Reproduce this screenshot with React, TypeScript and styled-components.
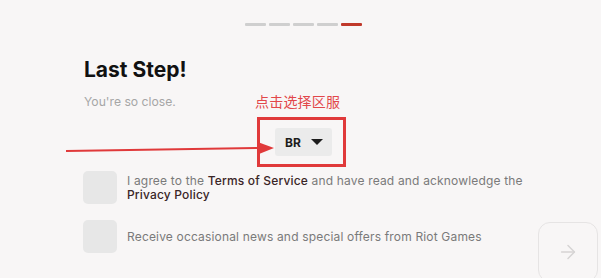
import React from "react";
import styled, { createGlobalStyle } from "styled-components";
import { ArrowRight } from "lucide-react";

const Global = createGlobalStyle`
  html, body { margin: 0; padding: 0; background: #f8f6f6; }
  body { font-family: Inter, "Noto Sans", Arial, sans-serif; }
`;

const Page = styled.div`
  position: relative;
  width: 601px;
  height: 278px;
  overflow: hidden;
  background: #f8f6f6;
`;

const Progress = styled.div`
  display: flex;
  justify-content: center;
  gap: 3px;
  padding: 23px 0 0 6px;
`;

const Segment = styled.div<{ $active?: boolean }>`
  width: 21px;
  height: 3px;
  border-radius: 1px;
  background: ${(p) => (p.$active ? "#c0392b" : "#cfcfcf")};
`;

const Section = styled.div`
  display: flex;
  padding-left: 84px;
  margin-top: 31px;
`;

const LeftCol = styled.div`
  width: 171px;
  display: flex;
  flex-direction: column;
`;

const Title = styled.h1`
  margin: 0;
  font-size: 21px;
  line-height: 26px;
  font-weight: 700;
  color: #111;
  letter-spacing: 0;
`;

const Subtitle = styled.p`
  margin: 11px 0 0;
  font-size: 12.2px;
  line-height: 16px;
  color: #a6a6a6;
`;

const RegionCol = styled.div`
  margin-top: 35px;
  display: flex;
  flex-direction: column;
  align-items: flex-start;
`;

const Hint = styled.span`
  font-family: "Noto Sans CJK SC", sans-serif;
  font-size: 14px;
  line-height: 18px;
  color: #e2474a;
  letter-spacing: 0.2px;
`;

const Frame = styled.div`
  margin: 7px 0 0 2px;
  width: 89px;
  height: 50px;
  box-sizing: border-box;
  border: 3px solid #e0393a;
  padding: 8px 11px 8px 15px;
`;

const RegionButton = styled.button`
  width: 57px;
  height: 28px;
  border: none;
  border-radius: 3px;
  background: #ebebeb;
  display: flex;
  align-items: center;
  gap: 10px;
  padding: 0 0 0 10px;
  font-family: Inter, sans-serif;
  font-weight: 700;
  font-size: 12px;
  color: #1d1d1d;
`;

const Caret = styled.span`
  width: 0;
  height: 0;
  border-left: 6px solid transparent;
  border-right: 6px solid transparent;
  border-top: 6px solid #1d1d1d;
`;

const Checks = styled.div`
  display: flex;
  flex-direction: column;
  gap: 16px;
  margin-top: 4px;
  padding-left: 83px;
`;

const CheckRow = styled.label<{ $center?: boolean }>`
  display: flex;
  align-items: ${(p) => (p.$center ? "center" : "flex-start")};
  gap: 10px;
`;

const Box = styled.span`
  flex: none;
  width: 34px;
  height: 33px;
  border-radius: 5px;
  background: #e7e7e7;
`;

const CheckText = styled.span<{ $top?: number }>`
  padding-top: ${(p) => p.$top ?? 0}px;
  font-size: 12px;
  line-height: 14px;
  letter-spacing: 0.17px;
  color: #7a7a7a;
  width: 410px;
`;

const Link = styled.span`
  color: #3a2526;
  font-weight: 500;
`;

const NextButton = styled.button`
  position: absolute;
  left: 538px;
  top: 222px;
  width: 60px;
  height: 60px;
  border-radius: 12px;
  border: 1px solid #e6e4e4;
  background: transparent;
  display: flex;
  align-items: center;
  justify-content: center;
  color: #d6d4d4;
  padding: 0;
`;

const Annotation = styled.svg`
  position: absolute;
  left: 0;
  top: 0;
  pointer-events: none;
`;

export default function App() {
  return (
    <Page>
      <Global />
      <Progress>
        <Segment />
        <Segment />
        <Segment />
        <Segment />
        <Segment $active />
      </Progress>
      <Section>
        <LeftCol>
          <Title>Last Step!</Title>
          <Subtitle>You're so close.</Subtitle>
        </LeftCol>
        <RegionCol>
          <Hint>点击选择区服</Hint>
          <Frame>
            <RegionButton>
              BR
              <Caret />
            </RegionButton>
          </Frame>
        </RegionCol>
      </Section>
      <Checks>
        <CheckRow>
          <Box />
          <CheckText $top={3}>
            I agree to the <Link>Terms of Service</Link> and have read and acknowledge the{" "}
            <Link>Privacy Policy</Link>
          </CheckText>
        </CheckRow>
        <CheckRow $center>
          <Box />
          <CheckText>Receive occasional news and special offers from Riot Games</CheckText>
        </CheckRow>
      </Checks>
      <NextButton aria-label="next">
        <ArrowRight size={22} strokeWidth={1.6} />
      </NextButton>
      <Annotation width="601" height="278" viewBox="0 0 601 278">
        <line x1="66" y1="151" x2="262" y2="148" stroke="#e0393a" strokeWidth="2" />
        <polygon points="259,142.5 274,148 259,154" fill="#e0393a" />
      </Annotation>
    </Page>
  );
}
